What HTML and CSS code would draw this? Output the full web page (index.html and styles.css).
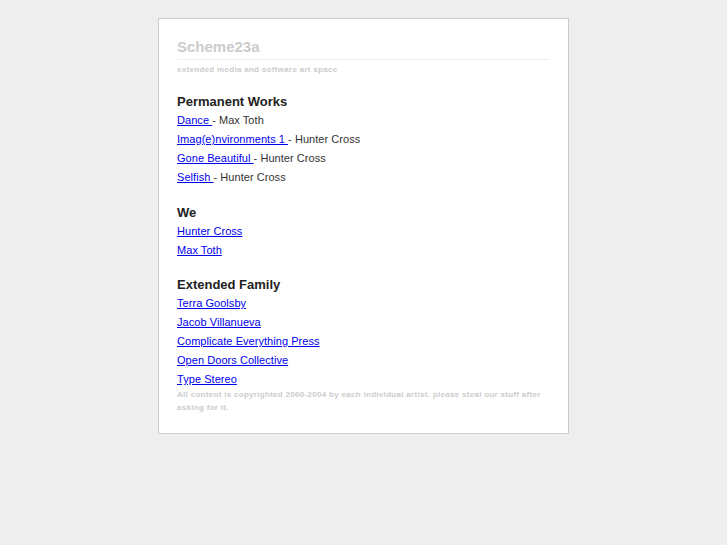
FILE: index.html
```html
<!DOCTYPE html>
<html lang="en">
<head>
  <meta charset="UTF-8" />
  <title>Scheme23a</title>
  <link rel="stylesheet" href="styles.css">
</head>
<body>
  <div class="page">
    <h1 class="title">Scheme23a</h1>
    <div class="tagline">extended media and software art space</div>

    <h2>Permanent Works</h2>
    <ul class="links">
      <li><a href="#">Dance </a> - Max Toth</li>
      <li><a href="#">Imag(e)nvironments 1 </a> - Hunter Cross</li>
      <li><a href="#">Gone Beautiful </a> - Hunter Cross</li>
      <li><a href="#">Selfish </a> - Hunter Cross</li>
    </ul>

    <h2>We</h2>
    <ul class="links">
      <li><a href="#">Hunter Cross</a></li>
      <li><a href="#">Max Toth</a></li>
    </ul>

    <h2>Extended Family</h2>
    <ul class="links">
      <li><a href="#">Terra Goolsby</a></li>
      <li><a href="#">Jacob Villanueva</a></li>
      <li><a href="#">Complicate Everything Press</a></li>
      <li><a href="#">Open Doors Collective</a></li>
      <li><a href="#">Type Stereo</a></li>
    </ul>

    <p class="footer">All content is copyrighted 2000-2004 by each individual artist. please steal our stuff after asking for it.</p>
  </div>
</body>
</html>
```

FILE: styles.css
```css
* { box-sizing: border-box; margin: 0; padding: 0; }
body {
  font-family: 'Liberation Sans', Arial, sans-serif;
  background-color: #eeeeee;
  color: #333;
}
a { color: #0000ee; }

.page {
  width: 411px;
  margin: 18px 0 0 158px;
  padding: 18px 18px 19px 18px;
  background-color: #fff;
  border: 1px solid #cccccc;
}
.title {
  font-size: 15px;
  font-weight: bold;
  color: #cccccc;
  line-height: 18px;
  padding: 1px 0 3px;
  border-bottom: 1px solid #eeeeee;
}
.tagline {
  font-size: 8px;
  font-weight: bold;
  color: #cccccc;
  line-height: 12px;
  margin-top: 4px;
  letter-spacing: 0.3px;
}
h2 {
  font-size: 13px;
  font-weight: bold;
  color: #222;
  line-height: 17px;
  margin-top: 17px;
  padding-bottom: 1px;
}
.links {
  list-style: none;
}
.links li {
  font-size: 11px;
  line-height: 19px;
  letter-spacing: 0.05px;
}
.links + h2 { margin-top: 16.5px; }
.footer {
  font-size: 8px;
  font-weight: bold;
  color: #cccccc;
  line-height: 13px;
  letter-spacing: 0.3px;
  margin-top: -1px;
}
```
